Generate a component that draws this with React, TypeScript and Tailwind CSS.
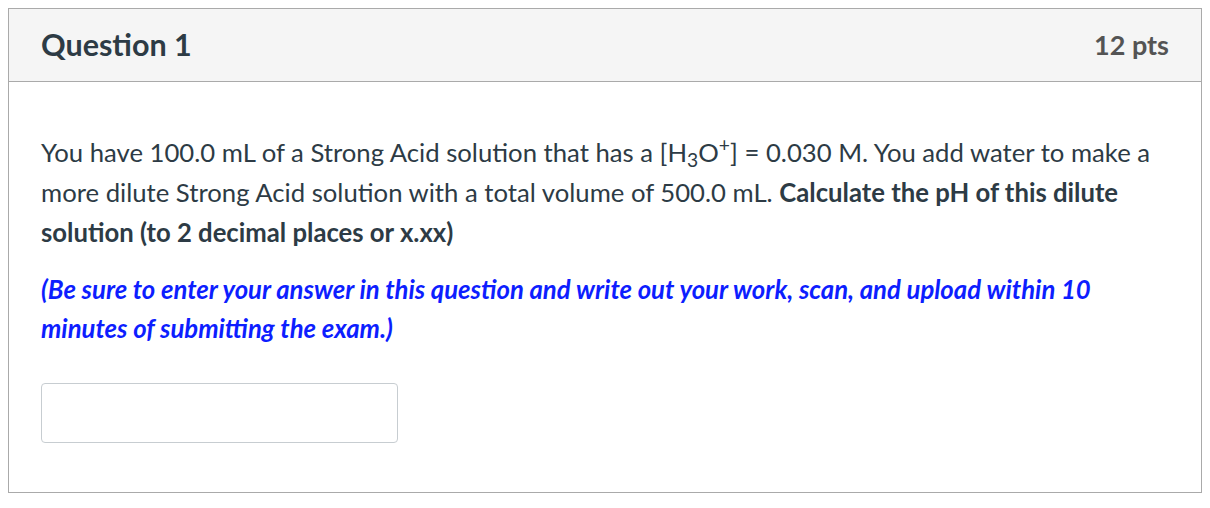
export default function App() {
  return (
    <div className="min-h-screen bg-white p-2" style={{ fontFamily: 'Lato, "Noto Sans", sans-serif' }}>
      <div className="border border-[#aaaaaa] text-[#2d3b45]">
        {/* header */}
        <div className="flex h-[73px] items-center justify-between border-b border-[#aaaaaa] bg-[#f5f5f5] px-8">
          <h2 className="text-[30.5px] font-bold">Question 1</h2>
          <span className="text-[27px] font-bold text-[#545454]">12 pts</span>
        </div>

        {/* body */}
        <div className="px-8 pt-[50px] pb-[49px]">
          <p className="text-[25.7px] leading-[40px]">
            You have 100.0 mL of a Strong Acid solution that has a [H<sub className="text-[0.75em]">3</sub>O<sup className="text-[0.75em]">+</sup>] = 0.030 M. You add water to make a more dilute Strong Acid solution with a total volume of 500.0 mL.{' '}
            <strong className="font-bold">Calculate the pH of this dilute solution (to 2 decimal places or x.xx)</strong>
          </p>
          <p className="mt-[18px] text-[25.7px] font-bold italic leading-[39px] text-[#0d1eff]">
            (Be sure to enter your answer in this question and write out your work, scan, and upload within 10 minutes of submitting the exam.)
          </p>
          <input
            type="text"
            className="mt-[35px] block h-[60px] w-[357px] rounded border border-[#c7cdd1] bg-white px-3 text-[25.6px] outline-none"
          />
        </div>
      </div>
    </div>
  );
}
